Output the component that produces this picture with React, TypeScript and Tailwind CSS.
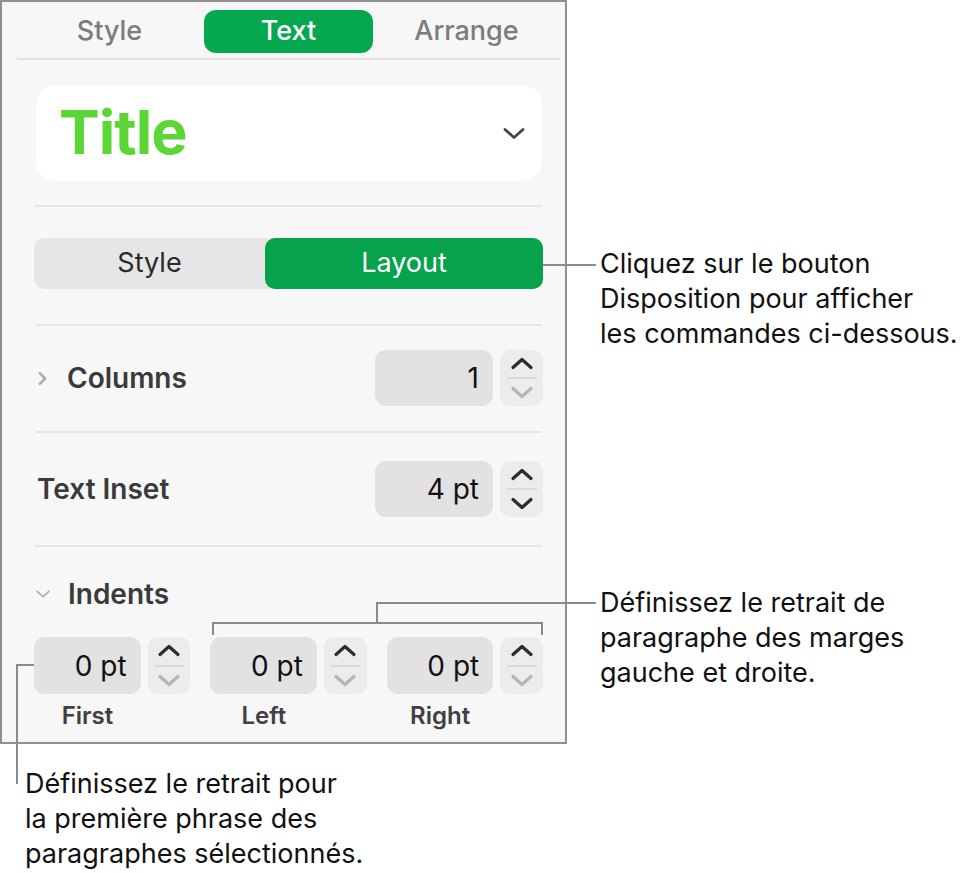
import React from 'react';

const font = { fontFamily: 'Inter, "Noto Sans", sans-serif' };

const Chevron = ({ dir, className, sw = 2.8 }: { dir: 'up' | 'down' | 'right'; className?: string; sw?: number }) => {
  const d = dir === 'up' ? 'M3 10 L12 2 L21 10' : dir === 'down' ? 'M3 2 L12 10 L21 2' : 'M2 2 L8 8 L2 14';
  const vb = dir === 'right' ? '0 0 10 16' : '0 0 24 12';
  return (
    <svg viewBox={vb} className={className} fill="none" stroke="currentColor" strokeWidth={sw} strokeLinecap="round" strokeLinejoin="round">
      <path d={d} />
    </svg>
  );
};

const Stepper = ({ downActive = false }: { downActive?: boolean }) => (
  <div className="w-[43px] h-full rounded-[10px] bg-[#ececec] flex flex-col items-center">
    <div className="flex-1 flex items-center justify-center text-[#2c2c2c]">
      <Chevron dir="up" sw={3.2} className="w-[24px] h-[13px]" />
    </div>
    <div className="w-[30px] h-[2px] bg-[#dadada]" />
    <div className={`flex-1 flex items-center justify-center ${downActive ? 'text-[#2c2c2c]' : 'text-[#b4b4b4]'}`}>
      <Chevron dir="down" sw={3.2} className="w-[24px] h-[13px]" />
    </div>
  </div>
);

const ValueBox = ({ value, w }: { value: string; w: string }) => (
  <div className={`${w} h-full rounded-[11px] bg-[#e2e2e2] flex items-center justify-end pr-[14px] text-[28px] text-[#111]`}>
    {value}
  </div>
);

const Sep = ({ mt }: { mt: string }) => <div className={`${mt} ml-[33px] mr-[23px] h-[2px] bg-[#e6e6e6]`} />;

export default function App() {
  return (
    <div className="relative w-[967px] h-[873px] bg-white overflow-hidden" style={font}>
      {/* Inspector panel */}
      <div className="w-[567px] h-[744px] border-2 border-[#8f8f8f] bg-[#f7f7f7]">
        {/* tabs */}
        <div className="ml-[15px] mr-[5px] h-[58px] pt-[2px] border-b-2 border-[#e2e2e2] grid grid-cols-3 items-center text-[27px] font-medium">
          <div className="text-center text-[#7c7c7c] pl-[4px]">Style</div>
          <div className="flex justify-center">
            <div className="w-[169px] h-[43px] rounded-[12px] bg-[#06a84f] text-white flex items-center justify-center">Text</div>
          </div>
          <div className="text-center text-[#7c7c7c] pr-[6px]">Arrange</div>
        </div>

        {/* paragraph style */}
        <div className="mt-[25px] ml-[34px] mr-[23px] h-[96px] rounded-[20px] bg-white flex items-center justify-between pl-[23px] pr-[16px]">
          <span className="text-[61px] font-bold text-[#5cd636] tracking-[-1px]">Title</span>
          <Chevron dir="down" className="w-[24px] h-[13px] text-[#444]" />
        </div>

        <Sep mt="mt-[24px]" />

        {/* segmented */}
        <div className="mt-[31px] ml-[32px] mr-[22px] h-[51px] rounded-[10px] bg-[#e6e6e6] flex text-[27px]">
          <div className="w-[231px] flex items-center justify-center text-[#2a2a2a]">Style</div>
          <div className="flex-1 rounded-[10px] bg-[#06a24c] flex items-center justify-center text-white">Layout</div>
        </div>

        <Sep mt="mt-[35px]" />

        {/* columns */}
        <div className="mt-[24px] ml-[32px] mr-[22px] h-[56px] flex items-center gap-[7px]">
          <Chevron dir="right" className="w-[9px] h-[15px] text-[#acacac] ml-[4px] mr-[13px]" />
          <span className="flex-1 text-[28px] font-semibold text-[#3a3a3a]">Columns</span>
          <ValueBox value="1" w="w-[118px]" />
          <Stepper />
        </div>

        <Sep mt="mt-[25px]" />

        {/* text inset */}
        <div className="mt-[28px] ml-[32px] mr-[22px] h-[56px] flex items-center gap-[7px]">
          <span className="flex-1 pl-[3px] text-[28px] font-semibold text-[#3a3a3a]">Text Inset</span>
          <ValueBox value="4 pt" w="w-[118px]" />
          <Stepper downActive />
        </div>

        <Sep mt="mt-[28px]" />

        {/* indents */}
        <div className="mt-[31px] ml-[32px] mr-[22px] flex items-center h-[32px]">
          <Chevron dir="down" className="w-[16px] h-[8px] text-[#b0b0b0] ml-[1px] mr-[17px]" />
          <span className="text-[28px] font-semibold text-[#3a3a3a]">Indents</span>
        </div>

        <div className="mt-[27px] ml-[32px] mr-[22px] grid grid-cols-3 gap-x-[20px]">
          {['First', 'Left', 'Right'].map((label) => (
            <div key={label} className="flex flex-col">
              <div className="h-[57px] flex gap-[7px]">
                <ValueBox value="0 pt" w="w-[107px]" />
                <Stepper />
              </div>
              <div className="w-[107px] mt-[4px] text-center text-[24px] font-semibold text-[#404040]">{label}</div>
            </div>
          ))}
        </div>
      </div>

      {/* callout 1 */}
      <div className="absolute left-[543px] top-[264px] w-[53px] h-[2px] bg-[#8a8a8a]" />
      <div className="absolute left-[600px] top-[246px] text-[27px] leading-[35px] text-[#111]">
        Cliquez sur le bouton<br />Disposition pour afficher<br />les commandes ci-dessous.
      </div>

      {/* callout 2: bracket */}
      <div className="absolute left-[212px] top-[622px] w-[331px] h-[13px] border-t-2 border-x-2 border-[#8a8a8a]" />
      <div className="absolute left-[376px] top-[602px] w-[2px] h-[21px] bg-[#8a8a8a]" />
      <div className="absolute left-[376px] top-[602px] w-[220px] h-[2px] bg-[#8a8a8a]" />
      <div className="absolute left-[600px] top-[585px] text-[27px] leading-[35px] text-[#111]">
        Définissez le retrait de<br />paragraphe des marges<br />gauche et droite.
      </div>

      {/* callout 3 */}
      <div className="absolute left-[16px] top-[664px] w-[18px] h-[2px] bg-[#8a8a8a]" />
      <div className="absolute left-[16px] top-[664px] w-[2px] h-[120px] bg-[#8a8a8a]" />
      <div className="absolute left-[25px] top-[766px] text-[27px] leading-[35px] text-[#111]">
        Définissez le retrait pour<br />la première phrase des<br />paragraphes sélectionnés.
      </div>
    </div>
  );
}
